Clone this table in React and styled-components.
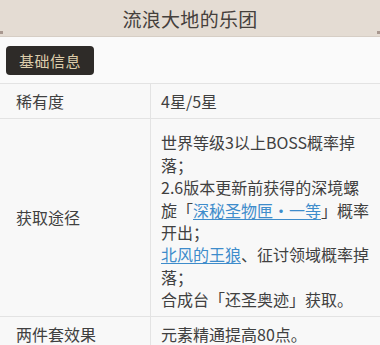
import styled, { createGlobalStyle } from 'styled-components';

const GlobalStyle = createGlobalStyle`
  body {
    margin: 0;
    background: #fafafa;
    font-family: "Noto Sans CJK SC", "Noto Sans", sans-serif;
    color: #404040;
  }
`;

const Page = styled.div`
  width: 380px;
  height: 345px;
  overflow: hidden;
  background: #fafafa;
`;

const Header = styled.header`
  position: relative;
  height: 36px;
  display: flex;
  align-items: center;
  justify-content: center;
  background: #e4dcd3;
  border-bottom: 1px solid #d6cec5;
`;

const Title = styled.h1`
  margin: 0;
  font-size: 19px;
  font-weight: 400;
  color: #45403c;
  letter-spacing: 0.3px;
`;

const Dot = styled.span`
  position: absolute;
  bottom: 2px;
  ${({ $side }) => ($side === 'left' ? 'left: 0;' : 'right: 0;')}
  width: 3px;
  height: 3px;
  background: #a89890;
`;

const TabBar = styled.div`
  display: flex;
  padding: 9px 6px 8px;
`;

const TabButton = styled.button`
  width: 88px;
  height: 29px;
  padding: 0;
  border: none;
  border-radius: 4px;
  background: #2e2b28;
  color: #ddcdab;
  font-family: inherit;
  font-size: 15px;
  letter-spacing: 0.5px;
`;

const Table = styled.div`
  border-top: 1px solid #e3e3e3;
`;

const Row = styled.div`
  display: grid;
  grid-template-columns: 151px 1fr;
  border-bottom: 1px solid #e3e3e3;
  background: #f8f8f8;
`;

const LabelCell = styled.div`
  display: flex;
  align-items: center;
  padding: 6px 10px 6px 16px;
  border-right: 1px solid #e3e3e3;
  font-size: 16px;
  line-height: 22.4px;
`;

const ValueCell = styled.div`
  padding: ${({ $tall }) => ($tall ? '12px 10px 5px' : '6px 10px')};
  font-size: 16px;
  line-height: 22.4px;
`;

const Line = styled.div``;

const Link = styled.span`
  color: #3e8ccb;
  text-decoration: underline;
  text-underline-offset: 2px;
`;

const rows = [
  { label: '稀有度', value: ['4星/5星'] },
  {
    label: '获取途径',
    value: [
      '世界等级3以上BOSS概率掉落；',
      <>2.6版本更新前获得的深境螺旋「<Link>深秘圣物匣·一等</Link>」概率开出；</>,
      <><Link>北风的王狼</Link>、征讨领域概率掉落；</>,
      '合成台「还圣奥迹」获取。',
    ],
    tall: true,
  },
  { label: '两件套效果', value: ['元素精通提高80点。'] },
];

export default function App() {
  return (
    <Page>
      <GlobalStyle />
      <Header>
        <Title>流浪大地的乐团</Title>
        <Dot $side="left" />
        <Dot $side="right" />
      </Header>

      <TabBar>
        <TabButton>基础信息</TabButton>
      </TabBar>

      <Table>
        {rows.map((row) => (
          <Row key={row.label}>
            <LabelCell>{row.label}</LabelCell>
            <ValueCell $tall={row.tall}>
              {row.value.map((line, i) => (
                <Line key={i}>{line}</Line>
              ))}
            </ValueCell>
          </Row>
        ))}
      </Table>
    </Page>
  );
}
